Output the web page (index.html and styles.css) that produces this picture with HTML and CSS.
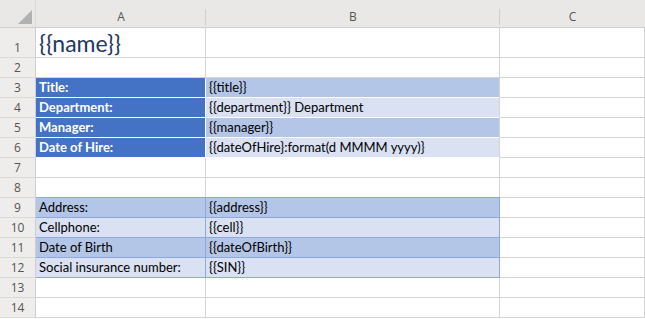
FILE: index.html
```html
<!doctype html>
<html lang="en">
  <head>
    <meta charset="utf-8">
    <title>Employee template</title>
    <link rel="stylesheet" href="styles.css">
  </head>
  <body>
    <div class="sheet">
      <div class="corner"><span class="tri"></span></div>
      <div class="colhead">A</div>
      <div class="colhead">B</div>
      <div class="colhead last">C</div>

      <div class="rowhead tall">1</div>
      <div class="cell tall name">{{name}}</div>
      <div class="cell tall"></div>
      <div class="cell tall"></div>

      <div class="rowhead">2</div>
      <div class="cell"></div>
      <div class="cell"></div>
      <div class="cell"></div>

      <div class="rowhead">3</div>
      <div class="cell key">Title:</div>
      <div class="cell val dark">{{title}}</div>
      <div class="cell"></div>

      <div class="rowhead">4</div>
      <div class="cell key">Department:</div>
      <div class="cell val light">{{department}} Department</div>
      <div class="cell"></div>

      <div class="rowhead">5</div>
      <div class="cell key">Manager:</div>
      <div class="cell val dark">{{manager}}</div>
      <div class="cell"></div>

      <div class="rowhead">6</div>
      <div class="cell key">Date of Hire:</div>
      <div class="cell val light">{{dateOfHire}:format(d MMMM yyyy)}</div>
      <div class="cell"></div>

      <div class="rowhead">7</div>
      <div class="cell"></div>
      <div class="cell"></div>
      <div class="cell"></div>

      <div class="rowhead">8</div>
      <div class="cell"></div>
      <div class="cell"></div>
      <div class="cell"></div>

      <div class="rowhead">9</div>
      <div class="cell band dark first">Address:</div>
      <div class="cell band dark first">{{address}}</div>
      <div class="cell"></div>

      <div class="rowhead">10</div>
      <div class="cell band light">Cellphone:</div>
      <div class="cell band light">{{cell}}</div>
      <div class="cell"></div>

      <div class="rowhead">11</div>
      <div class="cell band dark">Date of Birth</div>
      <div class="cell band dark">{{dateOfBirth}}</div>
      <div class="cell"></div>

      <div class="rowhead">12</div>
      <div class="cell band light">Social insurance number:</div>
      <div class="cell band light">{{SIN}}</div>
      <div class="cell"></div>

      <div class="rowhead">13</div>
      <div class="cell"></div>
      <div class="cell"></div>
      <div class="cell"></div>

      <div class="rowhead">14</div>
      <div class="cell"></div>
      <div class="cell"></div>
      <div class="cell"></div>
    </div>
  </body>
</html>
```
FILE: styles.css
```css
html, body { margin: 0; padding: 0; background: #fff; overflow: hidden; }

.sheet {
  display: grid;
  grid-template-columns: 36px 170px 294px 1fr;
  grid-template-rows: 28px 30px repeat(13, 20px);
  font-family: Lato, "Open Sans", sans-serif;
  font-size: 13px;
  color: #000;
}

.corner, .colhead {
  background: #e9e8e6;
  border-bottom: 1px solid #cfcfcf;
  box-sizing: border-box;
}
.corner { position: relative; border-right: 1px solid #d9d9d9; }
.corner .tri {
  position: absolute;
  right: 3px;
  bottom: 3px;
  width: 0;
  height: 0;
  border-left: 14px solid transparent;
  border-bottom: 14px solid #b1b1b1;
}
.colhead {
  display: flex;
  align-items: center;
  justify-content: center;
  padding-top: 6px;
  color: #555;
  font-family: "Open Sans", sans-serif;
  font-size: 12px;
  background-image: linear-gradient(#cfcfcf, #cfcfcf);
  background-size: 1px 16px;
  background-position: right 0 top 9px;
  background-repeat: no-repeat;
}
.colhead.last { background-image: none; }

.rowhead {
  background: #eeedeb;
  border-bottom: 1px solid #d9d9d9;
  border-right: 1px solid #d0d0d0;
  box-sizing: border-box;
  display: flex;
  align-items: flex-end;
  justify-content: center;
  padding-bottom: 1px;
  color: #555;
  font-family: "Open Sans", sans-serif;
  font-size: 12px;
}

.cell {
  border-right: 1px solid #d4d4d4;
  border-bottom: 1px solid #d4d4d4;
  box-sizing: border-box;
  display: flex;
  align-items: flex-end;
  padding: 0 3px 2px;
  white-space: nowrap;
  overflow: visible;
}

.name {
  font-size: 23px;
  color: #1f3864;
  padding-bottom: 0;
}

.key {
  background: #4472c4;
  color: #fff;
  font-weight: bold;
  border-bottom-color: #fff;
  border-right-color: #fff;
}
.val { border-bottom-color: #fff; }

.dark { background: #b4c6e7; }
.light { background: #d9e1f2; }

.band { border-color: #8ea9db; }
.band.first { border-top: 1px solid #8ea9db; margin-top: -1px; }
```
